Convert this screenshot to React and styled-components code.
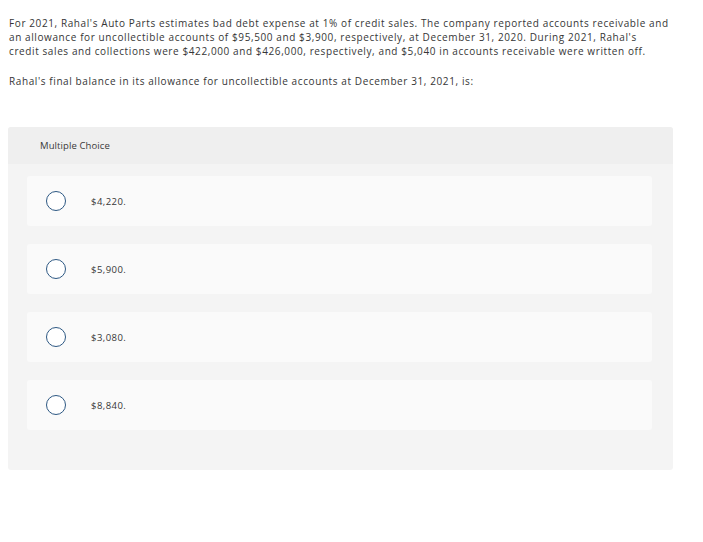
import React from 'react';
import styled, { createGlobalStyle } from 'styled-components';

const GlobalStyle = createGlobalStyle`
  body {
    margin: 8px;
    background: #ffffff;
    font-family: "Open Sans", "Liberation Sans", sans-serif;
    color: #333333;
  }
`;

const Page = styled.div`
  width: 680px;
  padding: 8px 0 0 1px;
`;

const Para = styled.p`
  margin: 0 0 16px;
  font-size: 10px;
  line-height: 14px;
  letter-spacing: 0.6px;
  color: #363636;
`;

const Card = styled.section`
  margin-top: 39px;
  background: #f4f4f4;
  border-radius: 3px;
  overflow: hidden;
  margin-left: -1px;
  width: 665px;
`;

const CardHeader = styled.div`
  height: 37px;
  display: flex;
  align-items: center;
  padding-left: 32px;
  background: #efefef;
  font-size: 9.5px;
  letter-spacing: 0.1px;
  color: #3a3a3a;
`;

const OptionList = styled.div`
  display: flex;
  flex-direction: column;
  gap: 18px;
  padding: 12px 21px 40px 19px;
`;

const OptionRow = styled.label`
  height: 50px;
  display: flex;
  align-items: center;
  gap: 25px;
  padding-left: 19px;
  background: #fafafa;
  border-radius: 3px;
  font-size: 9.5px;
  letter-spacing: 0.45px;
  color: #363636;
  cursor: pointer;
`;

const Radio = styled.span`
  width: 20px;
  height: 20px;
  box-sizing: border-box;
  border: 1.4px solid #2d5883;
  border-radius: 50%;
  background: #ffffff;
  flex-shrink: 0;
`;

const choices = ['$4,220.', '$5,900.', '$3,080.', '$8,840.'];

export default function App() {
  return (
    <>
      <GlobalStyle />
      <Page>
        <Para>
          For 2021, Rahal's Auto Parts estimates bad debt expense at 1% of credit sales. The company reported accounts receivable and
          <br />
          an allowance for uncollectible accounts of $95,500 and $3,900, respectively, at December 31, 2020. During 2021, Rahal's
          <br />
          credit sales and collections were $422,000 and $426,000, respectively, and $5,040 in accounts receivable were written off.
        </Para>
        <Para>Rahal's final balance in its allowance for uncollectible accounts at December 31, 2021, is:</Para>
        <Card>
          <CardHeader>Multiple Choice</CardHeader>
          <OptionList>
            {choices.map((c) => (
              <OptionRow key={c}>
                <Radio />
                <span>{c}</span>
              </OptionRow>
            ))}
          </OptionList>
        </Card>
      </Page>
    </>
  );
}
